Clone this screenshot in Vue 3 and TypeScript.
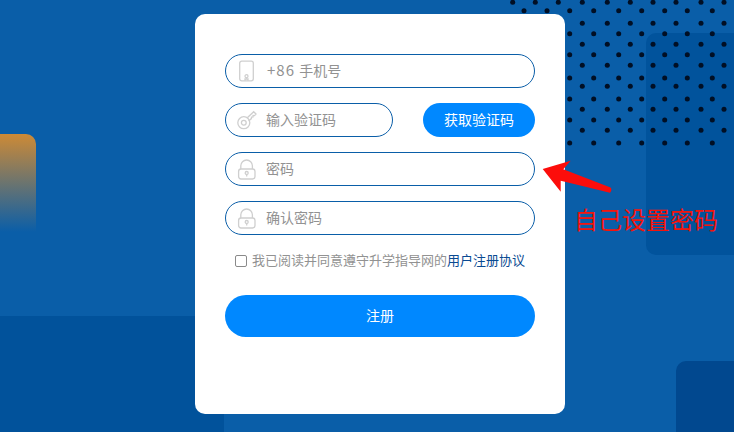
<script setup lang="ts">
const rowAX = [512.7, 535.3, 558.3, 582.3, 607.3, 630.3, 653, 676, 701, 724]
const rowBX = [524, 547, 569.7, 593.7, 618.7, 641.7, 664.7, 687.3, 712.3]
const rowAY = [2.3, 23.3, 44.3, 65.3, 86.3, 109.3, 130.3]
const rowBY = [10.7, 33.7, 54.7, 78, 99, 120, 143]
const dots: { x: number; y: number }[] = []
for (const y of rowAY) for (const x of rowAX) if (y < 12 || x > 565) dots.push({ x, y })
for (const y of rowBY) for (const x of rowBX) if (y < 12 || x > 565) dots.push({ x, y })
</script>

<template>
  <div class="page">
    <div class="deco orange"></div>
    <div class="deco bottom-left"></div>
    <div class="deco right-panel"></div>
    <div class="deco corner-panel"></div>
    <svg class="deco dots" width="734" height="160" viewBox="0 0 734 160">
      <circle v-for="(d, i) in dots" :key="i" :cx="d.x" :cy="d.y" r="2.5" fill="#010f24" />
    </svg>

    <main class="card">
      <div class="field">
        <svg class="icon" width="20" height="22" viewBox="0 0 20 22" fill="none" stroke="#cfcfcf" stroke-width="1.3">
          <rect x="2.7" y="1.2" width="13.6" height="19.6" rx="2" />
          <path d="M8 16.2a1.500 1.500 0 1 0 3 0 1.500 1.500 0 1 0-3 0M8 20.500v-1.500h3v1.500" />
        </svg>
        <span class="hint phone"><span class="prefix">+86 </span>手机号</span>
      </div>

      <div class="code-row">
        <div class="field code">
          <svg class="icon" width="20" height="20" viewBox="0 0 20 20" fill="none" stroke="#cfcfcf" stroke-width="1.3">
            <circle cx="6.800" cy="12.700" r="6" />
            <circle cx="6.800" cy="12.700" r="2.400" />
            <path d="M10.300 7.800 16.700 1.700l2.300 2.400-1.500 1.500-1.400-.2-.1 1.600-1.500.1-.1 1.500-2.800 2.500" />
          </svg>
          <span class="hint">输入验证码</span>
        </div>
        <button class="get-code" type="button">获取验证码</button>
      </div>

      <div v-for="label in ['密码', '确认密码']" :key="label" class="field">
        <svg class="icon" width="20" height="22" viewBox="0 0 20 22" fill="none" stroke="#cfcfcf" stroke-width="1.3">
          <path d="M3.800 11V7.800a5.800 5.800 0 0 1 11.600 0V11" />
          <rect x="1.600" y="11" width="16.400" height="10" rx="2.400" />
          <circle cx="9.700" cy="15" r="1.500" />
          <path d="M9.700 16.500v2" />
        </svg>
        <span class="hint">{{ label }}</span>
      </div>

      <div class="agree">
        <span class="box"></span>
        <span>我已阅读并同意遵守升学指导网的<a class="link">用户注册协议</a></span>
      </div>

      <button class="submit" type="button">注册</button>
    </main>

    <svg class="deco arrow" width="80" height="40" viewBox="0 0 80 40">
      <path
        d="M2.700 19 30.700 10.700 23.300 19.300 70.500 37.500Q72.500 39.500 70 42.700L20.700 30.700 20.700 41.700Z"
        transform="translate(0 -2)"
        fill="#fc0d0b"
      />
    </svg>
    <div class="note">自己设置密码</div>
  </div>
</template>

<style>
html, body { margin: 0; padding: 0; }
</style>

<style scoped>
.page {
  position: relative;
  width: 734px;
  height: 432px;
  overflow: hidden;
  background: #0a5ea8;
  font-family: "Noto Sans CJK SC", "Liberation Sans", sans-serif;
  padding: 14px 0 0 195px;
  box-sizing: border-box;
}
.deco { position: absolute; }
.orange {
  left: -10px; top: 134px; width: 46px; height: 98px;
  border-radius: 10px 10px 0 0;
  background: linear-gradient(#cd8a36, rgba(205, 138, 54, 0) 100%);
}
.bottom-left { left: 0; top: 316px; width: 224px; height: 116px; background: #01529b; }
.right-panel {
  left: 646px; top: 33px; width: 100px; height: 222px;
  border-radius: 10px; background: #01539c;
}
.corner-panel {
  left: 676px; top: 361px; width: 70px; height: 80px;
  border-radius: 10px; background: #01488f;
}
.dots { left: 0; top: 0; }
.card {
  position: relative;
  width: 370px;
  height: 400px;
  box-sizing: border-box;
  padding: 40px 30px 0;
  background: #fff;
  border-radius: 10px;
  display: flex;
  flex-direction: column;
  gap: 15px;
}
.field {
  height: 32px;
  border: 1px solid #0a5ea8;
  border-radius: 17px;
  display: flex;
  align-items: center;
  padding-left: 11px;
  gap: 9px;
}
.icon { flex: none; }
.hint {
  color: #929292;
  font-size: 14px;
  line-height: 20px;
  margin-top: -2px;
}
.phone { margin-left: 1px; }
.prefix { font-size: 15px; letter-spacing: 1px; white-space: pre; }
.code-row { display: flex; justify-content: space-between; }
.code { width: 155px; }
.get-code, .submit {
  border: 0;
  color: #fff;
  background: #0088ff;
  font-family: inherit;
  font-size: 14px;
  padding: 0 0 2px;
}
.get-code { width: 112px; height: 34px; border-radius: 17px; }
.agree {
  display: flex;
  align-items: center;
  gap: 5px;
  margin-left: 10px;
  height: 20px;
  font-size: 13px;
  line-height: 18px;
  color: #929292;
  white-space: nowrap;
}
.box {
  flex: none;
  width: 10px; height: 10px;
  margin-top: 1px;
  border: 1px solid #8a8a8a;
  border-radius: 2px;
  background: #fff;
}
.link { color: #0a4a92; }
.submit { height: 42px; border-radius: 21px; margin-top: 10px; }
.arrow { left: 540px; top: 152px; overflow: visible; }
.note {
  position: absolute;
  left: 574px; top: 203px;
  font-size: 24px;
  line-height: 32px;
  color: #f3140c;
  font-weight: 400;
  white-space: nowrap;
}
</style>
